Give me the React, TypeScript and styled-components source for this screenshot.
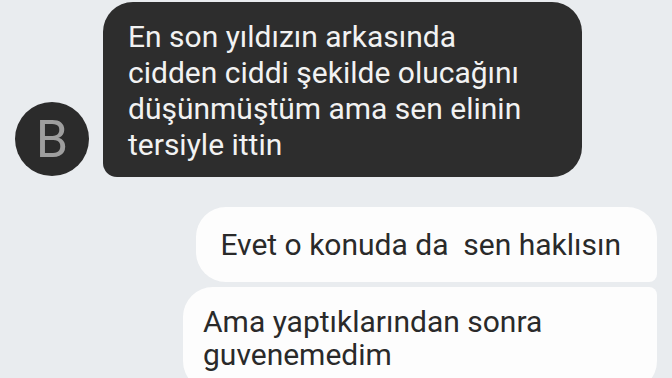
import React from 'react';
import styled, { createGlobalStyle } from 'styled-components';

const GlobalStyle = createGlobalStyle`
  html, body {
    margin: 0;
    padding: 0;
    background: #e9ecef;
    overflow: hidden;
  }
  body {
    font-family: Roboto, "Liberation Sans", sans-serif;
  }
`;

const Thread = styled.div`
  display: flex;
  flex-direction: column;
  height: 378px;
  padding: 2px 15px 0 15px;
  box-sizing: border-box;
`;

const IncomingRow = styled.div`
  align-items: flex-end;
  display: flex;
  gap: 14px;
`;

const Avatar = styled.div`
  align-items: center;
  background: #2b2b2b;
  border-radius: 50%;
  color: #9e9e9e;
  display: flex;
  flex-shrink: 0;
  font-size: 52px;
  height: 74px;
  justify-content: center;
  margin-bottom: 1px;
  width: 74px;
`;

const DarkBubble = styled.div`
  background: #2d2d2d;
  border-radius: 30px 30px 30px 14px;
  box-sizing: border-box;
  color: #f2f2f2;
  font-size: 30px;
  line-height: 36px;
  padding: 17px 50px 14px 25px;
  width: 479px;
`;

const OutgoingGroup = styled.div`
  align-items: flex-end;
  display: flex;
  flex-direction: column;
  gap: 5px;
  margin-top: 30px;
`;

const LightBubble = styled.div<{ $first?: boolean }>`
  background: #fdfdfd;
  border-radius: ${({ $first }) => ($first ? '30px 30px 8px 30px' : '30px 8px 30px 30px')};
  box-sizing: border-box;
  color: #2a2a2a;
  font-size: 30px;
  line-height: 33px;
  max-width: 474px;
  padding: ${({ $first }) => ($first ? '21px 36px 21px 24px' : '18px 20px 20px 20px')};
  white-space: pre-wrap;
`;

export default function App() {
  return (
    <>
      <GlobalStyle />
      <Thread>
        <IncomingRow>
          <Avatar>B</Avatar>
          <DarkBubble>
            En son yıldızın arkasında cidden ciddi şekilde olucağını düşünmüştüm ama sen elinin tersiyle ittin
          </DarkBubble>
        </IncomingRow>
        <OutgoingGroup>
          <LightBubble $first>Evet o konuda da  sen haklısın</LightBubble>
          <LightBubble>Ama yaptıklarından sonra guvenemedim</LightBubble>
        </OutgoingGroup>
      </Thread>
    </>
  );
}
